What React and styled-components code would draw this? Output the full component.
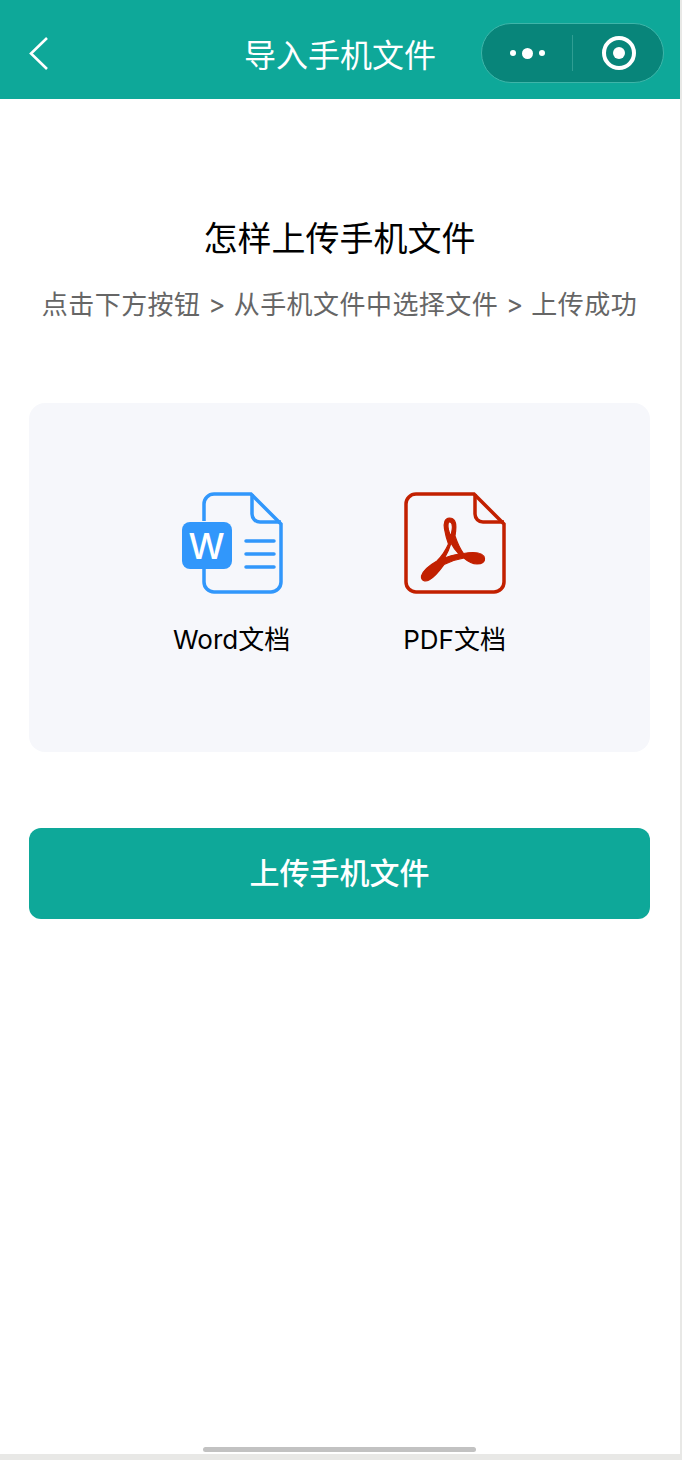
import React from "react"
import styled, { createGlobalStyle } from "styled-components"

const GlobalStyle = createGlobalStyle`
html, body {
  margin: 0;
  padding: 0;
  background: #e8e8e6;
}
body {
  font-family: Inter, "Noto Sans CJK SC", sans-serif;
}
`

const Screen = styled.div`
width: 680px;
height: 1454px;
background: #fff;
display: flex;
flex-direction: column;
position: relative;
`

const NavBar = styled.header`
height: 99px;
background: #0ea899;
display: flex;
align-items: center;
padding: 6px 16px 0 28px;
box-sizing: border-box;
position: relative;
`

const BackButton = styled.svg`
width: 22px;
height: 34px;
`

const NavTitle = styled.h1`
position: absolute;
left: 0;
right: 0;
top: 34px;
margin: 0;
text-align: center;
font-size: 32px;
line-height: 44px;
font-weight: 400;
color: #fff;
`

const Capsule = styled.div`
margin-left: auto;
width: 183px;
height: 60px;
margin-top: 1px;
box-sizing: border-box;
border: 1px solid #3eb5a9;
border-radius: 30px;
background: #08857a;
display: flex;
align-items: center;
position: relative;
`

const CapsuleSlot = styled.div`
flex: 1;
display: flex;
align-items: center;
justify-content: center;
`

const CapsuleDivider = styled.div`
width: 1px;
height: 36px;
background: #2f9e93;
`

const Dot = styled.span`
width: ${(p) => p.$size}px;
height: ${(p) => p.$size}px;
border-radius: 50%;
background: #fff;
margin: 0 3px;
`

const Target = styled.div`
width: 34px;
height: 34px;
margin-left: 2px;
box-sizing: border-box;
border: 4px solid #fff;
border-radius: 50%;
display: flex;
align-items: center;
justify-content: center;
&::after {
  content: "";
  width: 12px;
  height: 12px;
  border-radius: 50%;
  background: #fff;
}
`

const Content = styled.main`
flex: 1;
padding: 117px 30px 0 29px;
display: flex;
flex-direction: column;
align-items: stretch;
`

const Heading = styled.h2`
margin: 0;
text-align: center;
font-size: 34px;
line-height: 46px;
font-weight: 400;
color: #000;
`

const Steps = styled.p`
margin: 24px 0 0;
text-align: center;
font-size: 26px;
letter-spacing: 0.45px;
line-height: 38px;
color: #666;
white-space: nowrap;
`

const Formats = styled.section`
margin-top: 79px;
height: 349px;
border-radius: 16px;
background: #f6f7fb;
display: flex;
justify-content: center;
gap: 113px;
padding-top: 89px;
box-sizing: border-box;
`

const Format = styled.div`
display: flex;
flex-direction: column;
align-items: center;
`

const FormatIcon = styled.svg`
width: 102px;
height: 102px;
display: block;
`

const FormatLabel = styled.span`
margin-top: 27px;
font-size: 26px;
line-height: 38px;
color: #000;
white-space: nowrap;
`

const UploadButton = styled.button`
margin-top: 76px;
height: 91px;
padding: 0 0 6px;
border: 0;
border-radius: 12px;
background: #0ea899;
color: #fff;
font-family: inherit;
font-size: 30px;
font-weight: 500;
`

const HomeBar = styled.div`
position: absolute;
left: 203px;
bottom: 2px;
width: 273px;
height: 5px;
border-radius: 3px;
background: #c2c2c2;
`

const WordIcon = () => (
  <FormatIcon viewBox="0 0 102 102">
    <path
      d="M23 29V12a10 10 0 0 1 10-10h37l30 30v58a10 10 0 0 1-10 10H33a10 10 0 0 1-10-10V77"
      fill="none"
      stroke="#3197fb"
      strokeWidth="3.5"
    />
    <path d="M71 2v20a8 8 0 0 0 8 8h21" fill="none" stroke="#3197fb" strokeWidth="3.5" />
    <rect x="1" y="30" width="50" height="47" rx="8" fill="#3197fb" />
    <text x="25.5" y="67" textAnchor="middle" fontFamily="Inter" fontWeight="500" fontSize="36" fill="#fff">W</text>
    <path d="M65 49h28M65 62h28M65 75h28" stroke="#3197fb" strokeWidth="3.5" strokeLinecap="round" />
  </FormatIcon>
)

const PdfIcon = () => (
  <FormatIcon viewBox="0 0 102 102">
    <path
      d="M12 2h58l30 30v58a10 10 0 0 1-10 10H12a10 10 0 0 1-10-10V12A10 10 0 0 1 12 2z"
      fill="none"
      stroke="#c22000"
      strokeWidth="3.5"
    />
    <path d="M71 2v20a8 8 0 0 0 8 8h21" fill="none" stroke="#c22000" strokeWidth="3.5" />
    <path
      fillRule="evenodd"
      fill="#c22000"
      stroke="#c22000"
      strokeWidth="1.2"
      d="M45.3 26C41 26 39.5 31 40.5 37C41.5 43 43 48 44.5 52C41 60 37 65 33 69C26 73 19 78 17.5 84C17 88.5 21 90 25 88C31 85 36 78 40 72.5C47 69 54 67 60 66C64 69.5 68 72 73 72C78 72 81 70 80.5 66.5C80 62 74 60.5 69 60.5C65 60.5 62 61 59.5 61.5C56 57 53 50 51 44C52 38 52.5 33 51 29.5C50 27 48 26 45.3 26Z
      M45.5 30C43.5 30 43.8 35 44.5 38L46.5 44.5C48 40 48.8 35 48 32C47.5 30.5 46.5 30 45.5 30Z
      M47 51C45.5 56 43 62 40.5 66C44 64.5 49 63 55 62C52 59 49 55 47 51Z"
    />
  </FormatIcon>
)

export default function App() {
  return (
    <>
      <GlobalStyle />
      <Screen>
        <NavBar>
          <BackButton viewBox="0 0 22 34">
            <path d="M19 2L3 17.5l16 15.5" fill="none" stroke="#fff" strokeWidth="2.6" />
          </BackButton>
          <NavTitle>导入手机文件</NavTitle>
          <Capsule>
            <CapsuleSlot>
              <Dot $size={6} />
              <Dot $size={11} />
              <Dot $size={6} />
            </CapsuleSlot>
            <CapsuleDivider />
            <CapsuleSlot>
              <Target />
            </CapsuleSlot>
          </Capsule>
        </NavBar>
        <Content>
          <Heading>怎样上传手机文件</Heading>
          <Steps>点击下方按钮 &gt; 从手机文件中选择文件 &gt; 上传成功</Steps>
          <Formats>
            <Format>
              <WordIcon />
              <FormatLabel>Word文档</FormatLabel>
            </Format>
            <Format>
              <PdfIcon />
              <FormatLabel>PDF文档</FormatLabel>
            </Format>
          </Formats>
          <UploadButton>上传手机文件</UploadButton>
        </Content>
        <HomeBar />
      </Screen>
    </>
  )
}
